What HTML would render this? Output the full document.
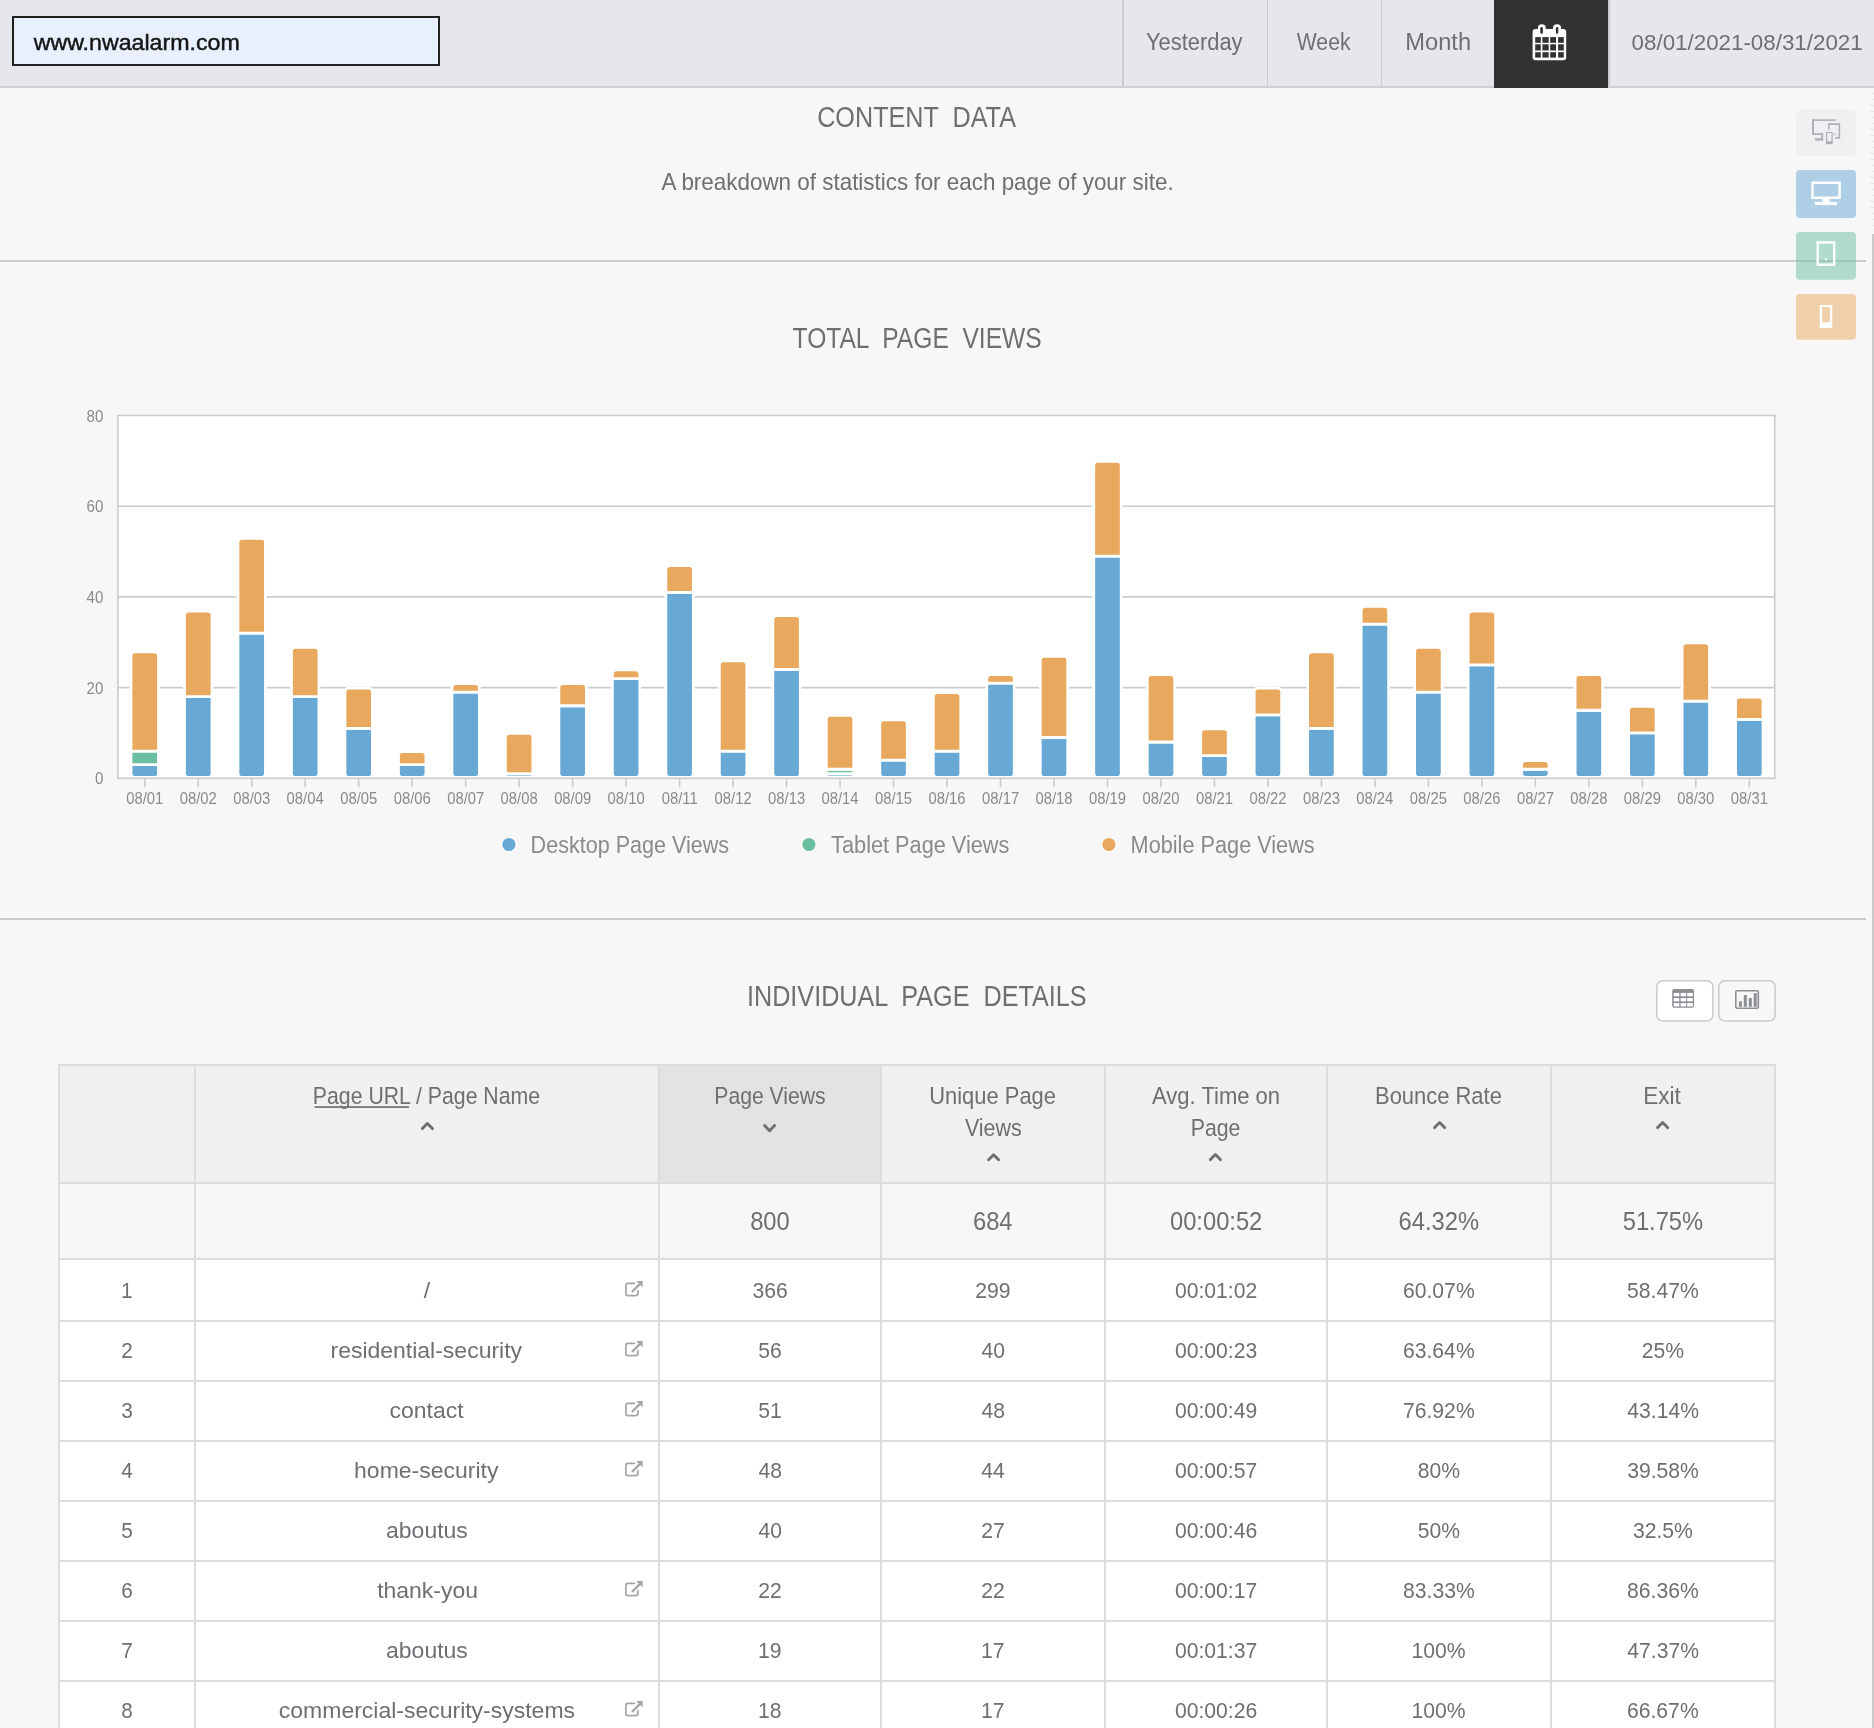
<!DOCTYPE html>
<html><head><meta charset="utf-8"><title>Content Data</title>
<style>
html,body{margin:0;padding:0;background:#f7f7f7;}
body{width:1874px;height:1728px;overflow:hidden;position:relative;font-family:"Liberation Sans",sans-serif;}
.topbar{position:absolute;left:0;top:0;width:1874px;height:86px;background:#e6e7eb;border-bottom:2px solid #cfd0d4;}
.div{position:absolute;top:0;width:1.5px;height:86px;background:#cacbcf;}
.search{position:absolute;left:12px;top:16px;width:424px;height:46px;border:2px solid #222;background:#e8f0fe;}
.sep{position:absolute;left:0;height:2px;background:#cbcbcf;}
.ticks{position:absolute;left:1870px;top:88px;width:4px;height:140px;background:repeating-linear-gradient(to bottom, transparent 0 5px, #e6e6e6 5px 6px);}
.vscroll{position:absolute;left:1871.5px;top:234px;width:2.5px;height:1494px;background:#c9c9c9;}
svg{position:absolute;left:0;top:0;will-change:transform;}
text{font-family:"Liberation Sans",sans-serif;white-space:pre;}
</style></head><body>
<div class="topbar"></div>
<div class="div" style="left:1122px"></div>
<div class="div" style="left:1266.5px"></div>
<div class="div" style="left:1380.5px"></div>
<div class="div" style="left:1608px"></div>
<div class="search"></div>
<div class="sep" style="top:260px;width:1866px"></div>
<div class="sep" style="top:918px;width:1866px"></div>
<div class="vscroll"></div>
<div class="ticks"></div>
<svg width="1874" height="1728" viewBox="0 0 1874 1728">
<g id="chart"><rect x="117.80" y="415.50" width="1656.90" height="362.80" fill="#fff"/>
<line x1="117.80" y1="687.60" x2="1774.70" y2="687.60" stroke="#cbccd1" stroke-width="1.6"/>
<line x1="117.80" y1="596.90" x2="1774.70" y2="596.90" stroke="#cbccd1" stroke-width="1.6"/>
<line x1="117.80" y1="506.20" x2="1774.70" y2="506.20" stroke="#cbccd1" stroke-width="1.6"/>
<path d="M131.00 764.69 L158.50 764.69 L158.50 773.30 Q158.50 777.50 154.30 777.50 L135.20 777.50 Q131.00 777.50 131.00 773.30 Z" fill="#68a8d5" stroke="#fff" stroke-width="2.8"/>
<path d="M131.00 751.09 L158.50 751.09 L158.50 764.69 L131.00 764.69 Z" fill="#6bbf9f" stroke="#fff" stroke-width="2.8"/>
<path d="M131.00 656.02 Q131.00 651.82 135.20 651.82 L154.30 651.82 Q158.50 651.82 158.50 656.02 L158.50 751.09 L131.00 751.09 Z" fill="#e8a95e" stroke="#fff" stroke-width="2.8"/>
<path d="M184.49 696.67 L211.99 696.67 L211.99 773.30 Q211.99 777.50 207.79 777.50 L188.69 777.50 Q184.49 777.50 184.49 773.30 Z" fill="#68a8d5" stroke="#fff" stroke-width="2.8"/>
<path d="M184.49 615.21 Q184.49 611.00 188.69 611.00 L207.79 611.00 Q211.99 611.00 211.99 615.21 L211.99 696.67 L184.49 696.67 Z" fill="#e8a95e" stroke="#fff" stroke-width="2.8"/>
<path d="M237.97 633.18 L265.47 633.18 L265.47 773.30 Q265.47 777.50 261.27 777.50 L242.17 777.50 Q237.97 777.50 237.97 773.30 Z" fill="#68a8d5" stroke="#fff" stroke-width="2.8"/>
<path d="M237.97 542.64 Q237.97 538.44 242.17 538.44 L261.27 538.44 Q265.47 538.44 265.47 542.64 L265.47 633.18 L237.97 633.18 Z" fill="#e8a95e" stroke="#fff" stroke-width="2.8"/>
<path d="M291.45 696.67 L318.95 696.67 L318.95 773.30 Q318.95 777.50 314.75 777.50 L295.65 777.50 Q291.45 777.50 291.45 773.30 Z" fill="#68a8d5" stroke="#fff" stroke-width="2.8"/>
<path d="M291.45 651.49 Q291.45 647.28 295.65 647.28 L314.75 647.28 Q318.95 647.28 318.95 651.49 L318.95 696.67 L291.45 696.67 Z" fill="#e8a95e" stroke="#fff" stroke-width="2.8"/>
<path d="M344.94 728.41 L372.44 728.41 L372.44 773.30 Q372.44 777.50 368.24 777.50 L349.14 777.50 Q344.94 777.50 344.94 773.30 Z" fill="#68a8d5" stroke="#fff" stroke-width="2.8"/>
<path d="M344.94 692.30 Q344.94 688.10 349.14 688.10 L368.24 688.10 Q372.44 688.10 372.44 692.30 L372.44 728.41 L344.94 728.41 Z" fill="#e8a95e" stroke="#fff" stroke-width="2.8"/>
<path d="M398.43 764.69 L425.93 764.69 L425.93 773.30 Q425.93 777.50 421.73 777.50 L402.62 777.50 Q398.43 777.50 398.43 773.30 Z" fill="#68a8d5" stroke="#fff" stroke-width="2.8"/>
<path d="M398.43 755.79 Q398.43 751.59 402.62 751.59 L421.73 751.59 Q425.93 751.59 425.93 755.79 L425.93 764.69 L398.43 764.69 Z" fill="#e8a95e" stroke="#fff" stroke-width="2.8"/>
<path d="M451.91 692.13 L479.41 692.13 L479.41 773.30 Q479.41 777.50 475.21 777.50 L456.11 777.50 Q451.91 777.50 451.91 773.30 Z" fill="#68a8d5" stroke="#fff" stroke-width="2.8"/>
<path d="M451.91 687.76 Q451.91 683.56 456.11 683.56 L475.21 683.56 Q479.41 683.56 479.41 687.76 L479.41 692.13 L451.91 692.13 Z" fill="#e8a95e" stroke="#fff" stroke-width="2.8"/>
<path d="M505.39 773.76 L532.89 773.76 L532.89 775.63 Q532.89 777.50 531.03 777.50 L507.26 777.50 Q505.39 777.50 505.39 775.63 Z" fill="#68a8d5" stroke="#fff" stroke-width="2.8"/>
<path d="M505.39 737.65 Q505.39 733.45 509.59 733.45 L528.69 733.45 Q532.89 733.45 532.89 737.65 L532.89 773.76 L505.39 773.76 Z" fill="#e8a95e" stroke="#fff" stroke-width="2.8"/>
<path d="M558.88 705.74 L586.38 705.74 L586.38 773.30 Q586.38 777.50 582.18 777.50 L563.08 777.50 Q558.88 777.50 558.88 773.30 Z" fill="#68a8d5" stroke="#fff" stroke-width="2.8"/>
<path d="M558.88 687.76 Q558.88 683.56 563.08 683.56 L582.18 683.56 Q586.38 683.56 586.38 687.76 L586.38 705.74 L558.88 705.74 Z" fill="#e8a95e" stroke="#fff" stroke-width="2.8"/>
<path d="M612.37 678.53 L639.87 678.53 L639.87 773.30 Q639.87 777.50 635.66 777.50 L616.57 777.50 Q612.37 777.50 612.37 773.30 Z" fill="#68a8d5" stroke="#fff" stroke-width="2.8"/>
<path d="M612.37 674.16 Q612.37 669.96 616.57 669.96 L635.66 669.96 Q639.87 669.96 639.87 674.16 L639.87 678.53 L612.37 678.53 Z" fill="#e8a95e" stroke="#fff" stroke-width="2.8"/>
<path d="M665.85 592.37 L693.35 592.37 L693.35 773.30 Q693.35 777.50 689.15 777.50 L670.05 777.50 Q665.85 777.50 665.85 773.30 Z" fill="#68a8d5" stroke="#fff" stroke-width="2.8"/>
<path d="M665.85 569.86 Q665.85 565.65 670.05 565.65 L689.15 565.65 Q693.35 565.65 693.35 569.86 L693.35 592.37 L665.85 592.37 Z" fill="#e8a95e" stroke="#fff" stroke-width="2.8"/>
<path d="M719.34 751.09 L746.84 751.09 L746.84 773.30 Q746.84 777.50 742.63 777.50 L723.54 777.50 Q719.34 777.50 719.34 773.30 Z" fill="#68a8d5" stroke="#fff" stroke-width="2.8"/>
<path d="M719.34 665.09 Q719.34 660.89 723.54 660.89 L742.63 660.89 Q746.84 660.89 746.84 665.09 L746.84 751.09 L719.34 751.09 Z" fill="#e8a95e" stroke="#fff" stroke-width="2.8"/>
<path d="M772.82 669.46 L800.32 669.46 L800.32 773.30 Q800.32 777.50 796.12 777.50 L777.02 777.50 Q772.82 777.50 772.82 773.30 Z" fill="#68a8d5" stroke="#fff" stroke-width="2.8"/>
<path d="M772.82 619.74 Q772.82 615.54 777.02 615.54 L796.12 615.54 Q800.32 615.54 800.32 619.74 L800.32 669.46 L772.82 669.46 Z" fill="#e8a95e" stroke="#fff" stroke-width="2.8"/>
<path d="M826.30 773.76 L853.80 773.76 L853.80 775.63 Q853.80 777.50 851.94 777.50 L828.17 777.50 Q826.30 777.50 826.30 775.63 Z" fill="#68a8d5" stroke="#fff" stroke-width="2.8"/>
<path d="M826.30 769.23 L853.80 769.23 L853.80 773.76 L826.30 773.76 Z" fill="#6bbf9f" stroke="#fff" stroke-width="2.8"/>
<path d="M826.30 719.51 Q826.30 715.31 830.50 715.31 L849.60 715.31 Q853.80 715.31 853.80 719.51 L853.80 769.23 L826.30 769.23 Z" fill="#e8a95e" stroke="#fff" stroke-width="2.8"/>
<path d="M879.79 760.16 L907.29 760.16 L907.29 773.30 Q907.29 777.50 903.09 777.50 L883.99 777.50 Q879.79 777.50 879.79 773.30 Z" fill="#68a8d5" stroke="#fff" stroke-width="2.8"/>
<path d="M879.79 724.04 Q879.79 719.84 883.99 719.84 L903.09 719.84 Q907.29 719.84 907.29 724.04 L907.29 760.16 L879.79 760.16 Z" fill="#e8a95e" stroke="#fff" stroke-width="2.8"/>
<path d="M933.27 751.09 L960.77 751.09 L960.77 773.30 Q960.77 777.50 956.57 777.50 L937.48 777.50 Q933.27 777.50 933.27 773.30 Z" fill="#68a8d5" stroke="#fff" stroke-width="2.8"/>
<path d="M933.27 696.84 Q933.27 692.63 937.48 692.63 L956.57 692.63 Q960.77 692.63 960.77 696.84 L960.77 751.09 L933.27 751.09 Z" fill="#e8a95e" stroke="#fff" stroke-width="2.8"/>
<path d="M986.76 683.06 L1014.26 683.06 L1014.26 773.30 Q1014.26 777.50 1010.06 777.50 L990.96 777.50 Q986.76 777.50 986.76 773.30 Z" fill="#68a8d5" stroke="#fff" stroke-width="2.8"/>
<path d="M986.76 678.70 Q986.76 674.50 990.96 674.50 L1010.06 674.50 Q1014.26 674.50 1014.26 678.70 L1014.26 683.06 L986.76 683.06 Z" fill="#e8a95e" stroke="#fff" stroke-width="2.8"/>
<path d="M1040.24 737.49 L1067.74 737.49 L1067.74 773.30 Q1067.74 777.50 1063.54 777.50 L1044.44 777.50 Q1040.24 777.50 1040.24 773.30 Z" fill="#68a8d5" stroke="#fff" stroke-width="2.8"/>
<path d="M1040.24 660.56 Q1040.24 656.36 1044.44 656.36 L1063.54 656.36 Q1067.74 656.36 1067.74 660.56 L1067.74 737.49 L1040.24 737.49 Z" fill="#e8a95e" stroke="#fff" stroke-width="2.8"/>
<path d="M1093.73 556.09 L1121.23 556.09 L1121.23 773.30 Q1121.23 777.50 1117.03 777.50 L1097.93 777.50 Q1093.73 777.50 1093.73 773.30 Z" fill="#68a8d5" stroke="#fff" stroke-width="2.8"/>
<path d="M1093.73 465.55 Q1093.73 461.35 1097.93 461.35 L1117.03 461.35 Q1121.23 461.35 1121.23 465.55 L1121.23 556.09 L1093.73 556.09 Z" fill="#e8a95e" stroke="#fff" stroke-width="2.8"/>
<path d="M1147.22 742.02 L1174.72 742.02 L1174.72 773.30 Q1174.72 777.50 1170.52 777.50 L1151.42 777.50 Q1147.22 777.50 1147.22 773.30 Z" fill="#68a8d5" stroke="#fff" stroke-width="2.8"/>
<path d="M1147.22 678.70 Q1147.22 674.50 1151.42 674.50 L1170.52 674.50 Q1174.72 674.50 1174.72 678.70 L1174.72 742.02 L1147.22 742.02 Z" fill="#e8a95e" stroke="#fff" stroke-width="2.8"/>
<path d="M1200.70 755.62 L1228.20 755.62 L1228.20 773.30 Q1228.20 777.50 1224.00 777.50 L1204.90 777.50 Q1200.70 777.50 1200.70 773.30 Z" fill="#68a8d5" stroke="#fff" stroke-width="2.8"/>
<path d="M1200.70 733.12 Q1200.70 728.91 1204.90 728.91 L1224.00 728.91 Q1228.20 728.91 1228.20 733.12 L1228.20 755.62 L1200.70 755.62 Z" fill="#e8a95e" stroke="#fff" stroke-width="2.8"/>
<path d="M1254.18 714.81 L1281.68 714.81 L1281.68 773.30 Q1281.68 777.50 1277.48 777.50 L1258.38 777.50 Q1254.18 777.50 1254.18 773.30 Z" fill="#68a8d5" stroke="#fff" stroke-width="2.8"/>
<path d="M1254.18 692.30 Q1254.18 688.10 1258.38 688.10 L1277.48 688.10 Q1281.68 688.10 1281.68 692.30 L1281.68 714.81 L1254.18 714.81 Z" fill="#e8a95e" stroke="#fff" stroke-width="2.8"/>
<path d="M1307.67 728.41 L1335.17 728.41 L1335.17 773.30 Q1335.17 777.50 1330.97 777.50 L1311.87 777.50 Q1307.67 777.50 1307.67 773.30 Z" fill="#68a8d5" stroke="#fff" stroke-width="2.8"/>
<path d="M1307.67 656.02 Q1307.67 651.82 1311.87 651.82 L1330.97 651.82 Q1335.17 651.82 1335.17 656.02 L1335.17 728.41 L1307.67 728.41 Z" fill="#e8a95e" stroke="#fff" stroke-width="2.8"/>
<path d="M1361.15 624.11 L1388.65 624.11 L1388.65 773.30 Q1388.65 777.50 1384.45 777.50 L1365.36 777.50 Q1361.15 777.50 1361.15 773.30 Z" fill="#68a8d5" stroke="#fff" stroke-width="2.8"/>
<path d="M1361.15 610.67 Q1361.15 606.47 1365.36 606.47 L1384.45 606.47 Q1388.65 606.47 1388.65 610.67 L1388.65 624.11 L1361.15 624.11 Z" fill="#e8a95e" stroke="#fff" stroke-width="2.8"/>
<path d="M1414.64 692.13 L1442.14 692.13 L1442.14 773.30 Q1442.14 777.50 1437.94 777.50 L1418.84 777.50 Q1414.64 777.50 1414.64 773.30 Z" fill="#68a8d5" stroke="#fff" stroke-width="2.8"/>
<path d="M1414.64 651.49 Q1414.64 647.28 1418.84 647.28 L1437.94 647.28 Q1442.14 647.28 1442.14 651.49 L1442.14 692.13 L1414.64 692.13 Z" fill="#e8a95e" stroke="#fff" stroke-width="2.8"/>
<path d="M1468.12 664.92 L1495.62 664.92 L1495.62 773.30 Q1495.62 777.50 1491.42 777.50 L1472.33 777.50 Q1468.12 777.50 1468.12 773.30 Z" fill="#68a8d5" stroke="#fff" stroke-width="2.8"/>
<path d="M1468.12 615.21 Q1468.12 611.00 1472.33 611.00 L1491.42 611.00 Q1495.62 611.00 1495.62 615.21 L1495.62 664.92 L1468.12 664.92 Z" fill="#e8a95e" stroke="#fff" stroke-width="2.8"/>
<path d="M1521.61 769.23 L1549.11 769.23 L1549.11 773.37 Q1549.11 777.50 1544.97 777.50 L1525.74 777.50 Q1521.61 777.50 1521.61 773.37 Z" fill="#68a8d5" stroke="#fff" stroke-width="2.8"/>
<path d="M1521.61 764.86 Q1521.61 760.66 1525.81 760.66 L1544.91 760.66 Q1549.11 760.66 1549.11 764.86 L1549.11 769.23 L1521.61 769.23 Z" fill="#e8a95e" stroke="#fff" stroke-width="2.8"/>
<path d="M1575.10 710.27 L1602.60 710.27 L1602.60 773.30 Q1602.60 777.50 1598.39 777.50 L1579.30 777.50 Q1575.10 777.50 1575.10 773.30 Z" fill="#68a8d5" stroke="#fff" stroke-width="2.8"/>
<path d="M1575.10 678.70 Q1575.10 674.50 1579.30 674.50 L1598.39 674.50 Q1602.60 674.50 1602.60 678.70 L1602.60 710.27 L1575.10 710.27 Z" fill="#e8a95e" stroke="#fff" stroke-width="2.8"/>
<path d="M1628.58 732.95 L1656.08 732.95 L1656.08 773.30 Q1656.08 777.50 1651.88 777.50 L1632.78 777.50 Q1628.58 777.50 1628.58 773.30 Z" fill="#68a8d5" stroke="#fff" stroke-width="2.8"/>
<path d="M1628.58 710.44 Q1628.58 706.24 1632.78 706.24 L1651.88 706.24 Q1656.08 706.24 1656.08 710.44 L1656.08 732.95 L1628.58 732.95 Z" fill="#e8a95e" stroke="#fff" stroke-width="2.8"/>
<path d="M1682.07 701.20 L1709.57 701.20 L1709.57 773.30 Q1709.57 777.50 1705.37 777.50 L1686.27 777.50 Q1682.07 777.50 1682.07 773.30 Z" fill="#68a8d5" stroke="#fff" stroke-width="2.8"/>
<path d="M1682.07 646.95 Q1682.07 642.75 1686.27 642.75 L1705.37 642.75 Q1709.57 642.75 1709.57 646.95 L1709.57 701.20 L1682.07 701.20 Z" fill="#e8a95e" stroke="#fff" stroke-width="2.8"/>
<path d="M1735.55 719.34 L1763.05 719.34 L1763.05 773.30 Q1763.05 777.50 1758.85 777.50 L1739.75 777.50 Q1735.55 777.50 1735.55 773.30 Z" fill="#68a8d5" stroke="#fff" stroke-width="2.8"/>
<path d="M1735.55 701.37 Q1735.55 697.17 1739.75 697.17 L1758.85 697.17 Q1763.05 697.17 1763.05 701.37 L1763.05 719.34 L1735.55 719.34 Z" fill="#e8a95e" stroke="#fff" stroke-width="2.8"/>
<rect x="117.80" y="415.50" width="1656.90" height="362.80" fill="none" stroke="#cbccd1" stroke-width="1.6"/>
<line x1="144.75" y1="778.30" x2="144.75" y2="787.30" stroke="#cbccd1" stroke-width="1.6"/>
<line x1="198.24" y1="778.30" x2="198.24" y2="787.30" stroke="#cbccd1" stroke-width="1.6"/>
<line x1="251.72" y1="778.30" x2="251.72" y2="787.30" stroke="#cbccd1" stroke-width="1.6"/>
<line x1="305.20" y1="778.30" x2="305.20" y2="787.30" stroke="#cbccd1" stroke-width="1.6"/>
<line x1="358.69" y1="778.30" x2="358.69" y2="787.30" stroke="#cbccd1" stroke-width="1.6"/>
<line x1="412.18" y1="778.30" x2="412.18" y2="787.30" stroke="#cbccd1" stroke-width="1.6"/>
<line x1="465.66" y1="778.30" x2="465.66" y2="787.30" stroke="#cbccd1" stroke-width="1.6"/>
<line x1="519.14" y1="778.30" x2="519.14" y2="787.30" stroke="#cbccd1" stroke-width="1.6"/>
<line x1="572.63" y1="778.30" x2="572.63" y2="787.30" stroke="#cbccd1" stroke-width="1.6"/>
<line x1="626.12" y1="778.30" x2="626.12" y2="787.30" stroke="#cbccd1" stroke-width="1.6"/>
<line x1="679.60" y1="778.30" x2="679.60" y2="787.30" stroke="#cbccd1" stroke-width="1.6"/>
<line x1="733.09" y1="778.30" x2="733.09" y2="787.30" stroke="#cbccd1" stroke-width="1.6"/>
<line x1="786.57" y1="778.30" x2="786.57" y2="787.30" stroke="#cbccd1" stroke-width="1.6"/>
<line x1="840.05" y1="778.30" x2="840.05" y2="787.30" stroke="#cbccd1" stroke-width="1.6"/>
<line x1="893.54" y1="778.30" x2="893.54" y2="787.30" stroke="#cbccd1" stroke-width="1.6"/>
<line x1="947.02" y1="778.30" x2="947.02" y2="787.30" stroke="#cbccd1" stroke-width="1.6"/>
<line x1="1000.51" y1="778.30" x2="1000.51" y2="787.30" stroke="#cbccd1" stroke-width="1.6"/>
<line x1="1053.99" y1="778.30" x2="1053.99" y2="787.30" stroke="#cbccd1" stroke-width="1.6"/>
<line x1="1107.48" y1="778.30" x2="1107.48" y2="787.30" stroke="#cbccd1" stroke-width="1.6"/>
<line x1="1160.97" y1="778.30" x2="1160.97" y2="787.30" stroke="#cbccd1" stroke-width="1.6"/>
<line x1="1214.45" y1="778.30" x2="1214.45" y2="787.30" stroke="#cbccd1" stroke-width="1.6"/>
<line x1="1267.93" y1="778.30" x2="1267.93" y2="787.30" stroke="#cbccd1" stroke-width="1.6"/>
<line x1="1321.42" y1="778.30" x2="1321.42" y2="787.30" stroke="#cbccd1" stroke-width="1.6"/>
<line x1="1374.90" y1="778.30" x2="1374.90" y2="787.30" stroke="#cbccd1" stroke-width="1.6"/>
<line x1="1428.39" y1="778.30" x2="1428.39" y2="787.30" stroke="#cbccd1" stroke-width="1.6"/>
<line x1="1481.88" y1="778.30" x2="1481.88" y2="787.30" stroke="#cbccd1" stroke-width="1.6"/>
<line x1="1535.36" y1="778.30" x2="1535.36" y2="787.30" stroke="#cbccd1" stroke-width="1.6"/>
<line x1="1588.85" y1="778.30" x2="1588.85" y2="787.30" stroke="#cbccd1" stroke-width="1.6"/>
<line x1="1642.33" y1="778.30" x2="1642.33" y2="787.30" stroke="#cbccd1" stroke-width="1.6"/>
<line x1="1695.82" y1="778.30" x2="1695.82" y2="787.30" stroke="#cbccd1" stroke-width="1.6"/>
<line x1="1749.30" y1="778.30" x2="1749.30" y2="787.30" stroke="#cbccd1" stroke-width="1.6"/>
<circle cx="508.90" cy="844.5" r="7.2" fill="#68a8d5" stroke="#fff" stroke-width="1.2"/>
<circle cx="808.90" cy="844.5" r="7.2" fill="#6bbf9f" stroke="#fff" stroke-width="1.2"/>
<circle cx="1108.90" cy="844.5" r="7.2" fill="#e8a95e" stroke="#fff" stroke-width="1.2"/></g>
<g id="table"><rect x="59" y="1065" width="1716" height="118" fill="#f0f0f0"/>
<rect x="659" y="1065" width="222" height="118" fill="#e3e3e3"/>
<rect x="59" y="1183" width="1716" height="76" fill="#f7f7f7"/>
<rect x="59" y="1259" width="1716" height="469" fill="#fff"/>
<rect x="58" y="1064.0" width="1718" height="2" fill="#dcdcdc"/>
<rect x="58" y="1182.0" width="1718" height="2" fill="#dcdcdc"/>
<rect x="58" y="1258.0" width="1718" height="2" fill="#dcdcdc"/>
<rect x="58" y="1320.0" width="1718" height="2" fill="#dcdcdc"/>
<rect x="58" y="1380.0" width="1718" height="2" fill="#dcdcdc"/>
<rect x="58" y="1440.0" width="1718" height="2" fill="#dcdcdc"/>
<rect x="58" y="1500.0" width="1718" height="2" fill="#dcdcdc"/>
<rect x="58" y="1560.0" width="1718" height="2" fill="#dcdcdc"/>
<rect x="58" y="1620.0" width="1718" height="2" fill="#dcdcdc"/>
<rect x="58" y="1680.0" width="1718" height="2" fill="#dcdcdc"/>
<rect x="58" y="1740.0" width="1718" height="2" fill="#dcdcdc"/>
<rect x="58.0" y="1064" width="2" height="664" fill="#dcdcdc"/>
<rect x="194.0" y="1064" width="2" height="664" fill="#dcdcdc"/>
<rect x="658.0" y="1064" width="2" height="664" fill="#dcdcdc"/>
<rect x="880.0" y="1064" width="2" height="664" fill="#dcdcdc"/>
<rect x="1104.0" y="1064" width="2" height="664" fill="#dcdcdc"/>
<rect x="1326.0" y="1064" width="2" height="664" fill="#dcdcdc"/>
<rect x="1550.0" y="1064" width="2" height="664" fill="#dcdcdc"/>
<rect x="1774.0" y="1064" width="2" height="664" fill="#dcdcdc"/>
<rect x="314.6" y="1106.2" width="94.3" height="1.7" fill="#6e6f73"/>
<path d="M422.40 1128.60 L427.40 1123.50 L432.40 1128.60" fill="none" stroke="#6e6f73" stroke-width="2.9" stroke-linecap="round" stroke-linejoin="round"/>
<path d="M764.60 1125.60 L769.60 1130.70 L774.60 1125.60" fill="none" stroke="#6e6f73" stroke-width="2.9" stroke-linecap="round" stroke-linejoin="round"/>
<path d="M988.60 1159.80 L993.60 1154.70 L998.60 1159.80" fill="none" stroke="#6e6f73" stroke-width="2.9" stroke-linecap="round" stroke-linejoin="round"/>
<path d="M1210.40 1159.60 L1215.40 1154.50 L1220.40 1159.60" fill="none" stroke="#6e6f73" stroke-width="2.9" stroke-linecap="round" stroke-linejoin="round"/>
<path d="M1434.60 1127.60 L1439.60 1122.50 L1444.60 1127.60" fill="none" stroke="#6e6f73" stroke-width="2.9" stroke-linecap="round" stroke-linejoin="round"/>
<path d="M1657.60 1127.60 L1662.60 1122.50 L1667.60 1127.60" fill="none" stroke="#6e6f73" stroke-width="2.9" stroke-linecap="round" stroke-linejoin="round"/>
<path d="M635.00 1283.40 H628.00 Q625.90 1283.40 625.90 1285.50 V1293.50 Q625.90 1295.60 628.00 1295.60 H635.80 Q637.90 1295.60 637.90 1293.50 V1290.00" fill="none" stroke="#a3a5a8" stroke-width="1.7"/>
<path d="M632.60 1291.30 L639.00 1284.90" stroke="#a3a5a8" stroke-width="2.3" stroke-linecap="round"/>
<path d="M636.20 1281.00 H642.70 V1287.50 Z" fill="#a3a5a8"/>
<path d="M635.00 1343.40 H628.00 Q625.90 1343.40 625.90 1345.50 V1353.50 Q625.90 1355.60 628.00 1355.60 H635.80 Q637.90 1355.60 637.90 1353.50 V1350.00" fill="none" stroke="#a3a5a8" stroke-width="1.7"/>
<path d="M632.60 1351.30 L639.00 1344.90" stroke="#a3a5a8" stroke-width="2.3" stroke-linecap="round"/>
<path d="M636.20 1341.00 H642.70 V1347.50 Z" fill="#a3a5a8"/>
<path d="M635.00 1403.40 H628.00 Q625.90 1403.40 625.90 1405.50 V1413.50 Q625.90 1415.60 628.00 1415.60 H635.80 Q637.90 1415.60 637.90 1413.50 V1410.00" fill="none" stroke="#a3a5a8" stroke-width="1.7"/>
<path d="M632.60 1411.30 L639.00 1404.90" stroke="#a3a5a8" stroke-width="2.3" stroke-linecap="round"/>
<path d="M636.20 1401.00 H642.70 V1407.50 Z" fill="#a3a5a8"/>
<path d="M635.00 1463.40 H628.00 Q625.90 1463.40 625.90 1465.50 V1473.50 Q625.90 1475.60 628.00 1475.60 H635.80 Q637.90 1475.60 637.90 1473.50 V1470.00" fill="none" stroke="#a3a5a8" stroke-width="1.7"/>
<path d="M632.60 1471.30 L639.00 1464.90" stroke="#a3a5a8" stroke-width="2.3" stroke-linecap="round"/>
<path d="M636.20 1461.00 H642.70 V1467.50 Z" fill="#a3a5a8"/>
<path d="M635.00 1583.40 H628.00 Q625.90 1583.40 625.90 1585.50 V1593.50 Q625.90 1595.60 628.00 1595.60 H635.80 Q637.90 1595.60 637.90 1593.50 V1590.00" fill="none" stroke="#a3a5a8" stroke-width="1.7"/>
<path d="M632.60 1591.30 L639.00 1584.90" stroke="#a3a5a8" stroke-width="2.3" stroke-linecap="round"/>
<path d="M636.20 1581.00 H642.70 V1587.50 Z" fill="#a3a5a8"/>
<path d="M635.00 1703.40 H628.00 Q625.90 1703.40 625.90 1705.50 V1713.50 Q625.90 1715.60 628.00 1715.60 H635.80 Q637.90 1715.60 637.90 1713.50 V1710.00" fill="none" stroke="#a3a5a8" stroke-width="1.7"/>
<path d="M632.60 1711.30 L639.00 1704.90" stroke="#a3a5a8" stroke-width="2.3" stroke-linecap="round"/>
<path d="M636.20 1701.00 H642.70 V1707.50 Z" fill="#a3a5a8"/></g>
<g id="icons"><rect x="1494" y="0" width="114" height="88" fill="#323232"/>
<rect x="1532.6" y="29.0" width="33.6" height="31.2" rx="3" fill="#fff"/>
<rect x="1537.9" y="24.2" width="7.85" height="10" rx="3.9" fill="#fff"/>
<rect x="1553.0" y="24.2" width="8.1" height="10" rx="3.9" fill="#fff"/>
<rect x="1540.3" y="27.0" width="2.6" height="6.8" rx="1.2" fill="#323232"/>
<rect x="1555.9" y="27.0" width="2.4" height="6.8" rx="1.2" fill="#323232"/>
<rect x="1535.2" y="37.1" width="5.6" height="5.7" fill="#323232"/>
<rect x="1535.2" y="44.3" width="5.6" height="6.2" fill="#323232"/>
<rect x="1535.2" y="52.2" width="5.6" height="5.4" fill="#323232"/>
<rect x="1542.4" y="37.1" width="6.3" height="5.7" fill="#323232"/>
<rect x="1542.4" y="44.3" width="6.3" height="6.2" fill="#323232"/>
<rect x="1542.4" y="52.2" width="6.3" height="5.4" fill="#323232"/>
<rect x="1550.2" y="37.1" width="5.8" height="5.7" fill="#323232"/>
<rect x="1550.2" y="44.3" width="5.8" height="6.2" fill="#323232"/>
<rect x="1550.2" y="52.2" width="5.8" height="5.4" fill="#323232"/>
<rect x="1558.1" y="37.1" width="5.7" height="5.7" fill="#323232"/>
<rect x="1558.1" y="44.3" width="5.7" height="6.2" fill="#323232"/>
<rect x="1558.1" y="52.2" width="5.7" height="5.4" fill="#323232"/>
<rect x="1796" y="110" width="60" height="45.7" rx="4" fill="#eff0f2"/>
<rect x="1812.0" y="119.3" width="23.9" height="1.6" fill="#aeb0b3"/>
<rect x="1812.0" y="119.3" width="2.0" height="15.6" fill="#aeb0b3"/>
<rect x="1812.0" y="133.1" width="11.1" height="1.8" fill="#aeb0b3"/>
<rect x="1821.2" y="133.1" width="1.9" height="7.5" fill="#aeb0b3"/>
<rect x="1815.0" y="138.2" width="8.1" height="2.4" fill="#aeb0b3"/>
<path d="M1828.8 129.7 V124.1 H1839.4 V137.9 H1835.1" fill="none" stroke="#aeb0b3" stroke-width="1.6"/>
<circle cx="1834.7" cy="134.4" r="0.9" fill="#aeb0b3"/>
<path d="M1826 131.9 H1832.7 V144.2 H1826 Z M1827.2 133.1 V141.2 H1831.5 V133.1 Z" fill="#aeb0b3" fill-rule="evenodd"/>
<rect x="1796" y="170" width="60" height="47.9" rx="4" fill="#68a8d5" fill-opacity="0.5"/>
<path d="M1811.3 181.6 H1840.8 V199.1 H1811.3 Z M1813.7 183.9 V196.6 H1838.4 V183.9 Z" fill="#fff" fill-rule="evenodd"/>
<rect x="1822.6" y="199" width="6.9" height="3" fill="#fff"/><rect x="1814.8" y="201.9" width="22.2" height="3.2" fill="#fff"/>
<rect x="1796" y="232" width="60" height="47.8" rx="4" fill="#6bbf9f" fill-opacity="0.5"/>
<rect x="1817.7" y="242.4" width="16.5" height="22.3" fill="none" stroke="#fff" stroke-width="2.4"/>
<circle cx="1825.9" cy="259.3" r="1.1" fill="#fff"/>
<rect x="1796" y="294" width="60" height="45.8" rx="4" fill="#e8a95e" fill-opacity="0.5"/>
<path d="M1819.7 305 H1832.2 V328 H1819.7 Z M1822.0 307.0 V322.2 H1829.9 V307.0 Z" fill="#fff" fill-rule="evenodd"/>
<rect x="1656.8" y="980.8" width="56.1" height="40.2" rx="6" fill="#fff" stroke="#c9cacd" stroke-width="1.5"/>
<rect x="1718.8" y="980.8" width="56.3" height="40.2" rx="6" fill="#f7f7f7" stroke="#c9cacd" stroke-width="1.5"/>
<path d="M1672.2 991 Q1672.2 989 1674.2 989 H1692 Q1694 989 1694 991 V1005.8 Q1694 1007.8 1692 1007.8 H1674.2 Q1672.2 1007.8 1672.2 1005.8 Z" fill="#8b8e92"/>
<rect x="1673.7" y="992.9" width="5.6" height="3.4" fill="#fff"/>
<rect x="1673.7" y="998.0" width="5.6" height="3.4" fill="#fff"/>
<rect x="1673.7" y="1003.1" width="5.6" height="3.4" fill="#fff"/>
<rect x="1680.6" y="992.9" width="5.6" height="3.4" fill="#fff"/>
<rect x="1680.6" y="998.0" width="5.6" height="3.4" fill="#fff"/>
<rect x="1680.6" y="1003.1" width="5.6" height="3.4" fill="#fff"/>
<rect x="1687.2" y="992.9" width="5.6" height="3.4" fill="#fff"/>
<rect x="1687.2" y="998.0" width="5.6" height="3.4" fill="#fff"/>
<rect x="1687.2" y="1003.1" width="5.6" height="3.4" fill="#fff"/>
<rect x="1735.8" y="990.7" width="22.5" height="17.6" rx="1.5" fill="none" stroke="#8b8e92" stroke-width="1.6"/>
<rect x="1738.9" y="1001.3" width="3.0" height="5.5" fill="#8b8e92"/>
<rect x="1743.8" y="995.0" width="3.0" height="11.8" fill="#8b8e92"/>
<rect x="1748.8" y="998.1" width="3.0" height="8.7" fill="#8b8e92"/>
<rect x="1753.7" y="993.2" width="3.0" height="13.6" fill="#8b8e92"/></g>
<g id="texts"><text transform="translate(33.66 50.00) scale(1.0375 1)" font-size="22.35" fill="#151515" stroke="#151515" stroke-width="0.45">www.nwaalarm.com</text>
<text transform="translate(1145.91 50.40) scale(0.8982 1)" font-size="24.40" fill="#6e6f73">Yesterday</text>
<text transform="translate(1296.79 50.40) scale(0.8674 1)" font-size="24.40" fill="#6e6f73">Week</text>
<text transform="translate(1405.24 50.40) scale(0.9715 1)" font-size="24.40" fill="#6e6f73">Month</text>
<text transform="translate(1631.61 50.20) scale(0.9846 1)" font-size="22.70" fill="#6e6f73">08/01/2021-08/31/2021</text>
<text transform="translate(817.14 126.50) scale(0.8634 1)" font-size="29.20" fill="#6e6f73">CONTENT  DATA</text>
<text transform="translate(661.44 190.10) scale(0.9755 1)" font-size="23.00" fill="#6e6f73">A breakdown of statistics for each page of your site.</text>
<text transform="translate(792.55 348.10) scale(0.8512 1)" font-size="28.90" fill="#6e6f73">TOTAL  PAGE  VIEWS</text>
<text transform="translate(746.97 1006.40) scale(0.8366 1)" font-size="30.10" fill="#6e6f73">INDIVIDUAL  PAGE  DETAILS</text>
<text transform="translate(144.81 804.00) scale(0.9460 1)" font-size="15.68" fill="#8a8a8a" text-anchor="middle">08/01</text>
<text transform="translate(198.31 804.00) scale(0.9460 1)" font-size="15.68" fill="#8a8a8a" text-anchor="middle">08/02</text>
<text transform="translate(251.74 804.00) scale(0.9460 1)" font-size="15.68" fill="#8a8a8a" text-anchor="middle">08/03</text>
<text transform="translate(305.11 804.00) scale(0.9460 1)" font-size="15.68" fill="#8a8a8a" text-anchor="middle">08/04</text>
<text transform="translate(358.69 804.00) scale(0.9460 1)" font-size="15.68" fill="#8a8a8a" text-anchor="middle">08/05</text>
<text transform="translate(412.19 804.00) scale(0.9460 1)" font-size="15.68" fill="#8a8a8a" text-anchor="middle">08/06</text>
<text transform="translate(465.73 804.00) scale(0.9460 1)" font-size="15.68" fill="#8a8a8a" text-anchor="middle">08/07</text>
<text transform="translate(519.16 804.00) scale(0.9460 1)" font-size="15.68" fill="#8a8a8a" text-anchor="middle">08/08</text>
<text transform="translate(572.67 804.00) scale(0.9460 1)" font-size="15.68" fill="#8a8a8a" text-anchor="middle">08/09</text>
<text transform="translate(626.10 804.00) scale(0.9460 1)" font-size="15.68" fill="#8a8a8a" text-anchor="middle">08/10</text>
<text transform="translate(679.66 804.00) scale(0.9460 1)" font-size="15.68" fill="#8a8a8a" text-anchor="middle">08/11</text>
<text transform="translate(733.16 804.00) scale(0.9460 1)" font-size="15.68" fill="#8a8a8a" text-anchor="middle">08/12</text>
<text transform="translate(786.59 804.00) scale(0.9460 1)" font-size="15.68" fill="#8a8a8a" text-anchor="middle">08/13</text>
<text transform="translate(839.96 804.00) scale(0.9460 1)" font-size="15.68" fill="#8a8a8a" text-anchor="middle">08/14</text>
<text transform="translate(893.54 804.00) scale(0.9460 1)" font-size="15.68" fill="#8a8a8a" text-anchor="middle">08/15</text>
<text transform="translate(947.04 804.00) scale(0.9460 1)" font-size="15.68" fill="#8a8a8a" text-anchor="middle">08/16</text>
<text transform="translate(1000.58 804.00) scale(0.9460 1)" font-size="15.68" fill="#8a8a8a" text-anchor="middle">08/17</text>
<text transform="translate(1054.01 804.00) scale(0.9460 1)" font-size="15.68" fill="#8a8a8a" text-anchor="middle">08/18</text>
<text transform="translate(1107.52 804.00) scale(0.9460 1)" font-size="15.68" fill="#8a8a8a" text-anchor="middle">08/19</text>
<text transform="translate(1160.95 804.00) scale(0.9460 1)" font-size="15.68" fill="#8a8a8a" text-anchor="middle">08/20</text>
<text transform="translate(1214.51 804.00) scale(0.9460 1)" font-size="15.68" fill="#8a8a8a" text-anchor="middle">08/21</text>
<text transform="translate(1268.01 804.00) scale(0.9460 1)" font-size="15.68" fill="#8a8a8a" text-anchor="middle">08/22</text>
<text transform="translate(1321.44 804.00) scale(0.9460 1)" font-size="15.68" fill="#8a8a8a" text-anchor="middle">08/23</text>
<text transform="translate(1374.81 804.00) scale(0.9460 1)" font-size="15.68" fill="#8a8a8a" text-anchor="middle">08/24</text>
<text transform="translate(1428.39 804.00) scale(0.9460 1)" font-size="15.68" fill="#8a8a8a" text-anchor="middle">08/25</text>
<text transform="translate(1481.89 804.00) scale(0.9460 1)" font-size="15.68" fill="#8a8a8a" text-anchor="middle">08/26</text>
<text transform="translate(1535.43 804.00) scale(0.9460 1)" font-size="15.68" fill="#8a8a8a" text-anchor="middle">08/27</text>
<text transform="translate(1588.86 804.00) scale(0.9460 1)" font-size="15.68" fill="#8a8a8a" text-anchor="middle">08/28</text>
<text transform="translate(1642.37 804.00) scale(0.9460 1)" font-size="15.68" fill="#8a8a8a" text-anchor="middle">08/29</text>
<text transform="translate(1695.80 804.00) scale(0.9460 1)" font-size="15.68" fill="#8a8a8a" text-anchor="middle">08/30</text>
<text transform="translate(1749.36 804.00) scale(0.9460 1)" font-size="15.68" fill="#8a8a8a" text-anchor="middle">08/31</text>
<text transform="translate(94.88 784.30) scale(0.9500 1)" font-size="15.90" fill="#8a8a8a">0</text>
<text transform="translate(86.50 693.60) scale(0.9500 1)" font-size="15.90" fill="#8a8a8a">20</text>
<text transform="translate(86.50 602.90) scale(0.9500 1)" font-size="15.90" fill="#8a8a8a">40</text>
<text transform="translate(86.50 512.20) scale(0.9500 1)" font-size="15.90" fill="#8a8a8a">60</text>
<text transform="translate(86.50 421.50) scale(0.9500 1)" font-size="15.90" fill="#8a8a8a">80</text>
<text transform="translate(530.62 853.00) scale(0.9256 1)" font-size="23.30" fill="#8a8a8a">Desktop Page Views</text>
<text transform="translate(831.11 853.00) scale(0.9329 1)" font-size="23.30" fill="#8a8a8a">Tablet Page Views</text>
<text transform="translate(1130.61 853.00) scale(0.9317 1)" font-size="23.30" fill="#8a8a8a">Mobile Page Views</text>
<text transform="translate(312.85 1104.20) scale(0.8974 1)" font-size="23.70" fill="#6e6f73">Page URL / Page Name</text>
<text transform="translate(714.35 1104.20) scale(0.8931 1)" font-size="23.70" fill="#6e6f73">Page Views</text>
<text transform="translate(929.20 1104.20) scale(0.9255 1)" font-size="23.70" fill="#6e6f73">Unique Page</text>
<text transform="translate(964.89 1136.00) scale(0.9053 1)" font-size="23.70" fill="#6e6f73">Views</text>
<text transform="translate(1152.04 1104.20) scale(0.9293 1)" font-size="23.70" fill="#6e6f73">Avg. Time on</text>
<text transform="translate(1190.75 1136.00) scale(0.8973 1)" font-size="23.70" fill="#6e6f73">Page</text>
<text transform="translate(1374.99 1104.20) scale(0.9267 1)" font-size="23.70" fill="#6e6f73">Bounce Rate</text>
<text transform="translate(1643.14 1104.20) scale(0.9522 1)" font-size="23.70" fill="#6e6f73">Exit</text>
<text transform="translate(769.95 1229.90) scale(0.9550 1)" font-size="24.86" fill="#6e6f73" text-anchor="middle">800</text>
<text transform="translate(992.74 1229.90) scale(0.9550 1)" font-size="24.86" fill="#6e6f73" text-anchor="middle">684</text>
<text transform="translate(1216.12 1229.90) scale(0.9550 1)" font-size="24.86" fill="#6e6f73" text-anchor="middle">00:00:52</text>
<text transform="translate(1438.81 1229.90) scale(0.9550 1)" font-size="24.86" fill="#6e6f73" text-anchor="middle">64.32%</text>
<text transform="translate(1662.93 1229.90) scale(0.9550 1)" font-size="24.86" fill="#6e6f73" text-anchor="middle">51.75%</text>
<text transform="translate(126.73 1298.20) scale(0.9500 1)" font-size="21.90" fill="#6e6f73" text-anchor="middle">1</text>
<text transform="translate(427.00 1298.20) scale(1.0500 1)" font-size="21.90" fill="#6e6f73" text-anchor="middle">/</text>
<text transform="translate(770.06 1298.20) scale(0.9650 1)" font-size="21.90" fill="#6e6f73" text-anchor="middle">366</text>
<text transform="translate(992.96 1298.20) scale(0.9650 1)" font-size="21.90" fill="#6e6f73" text-anchor="middle">299</text>
<text transform="translate(1216.11 1298.20) scale(0.9650 1)" font-size="21.90" fill="#6e6f73" text-anchor="middle">00:01:02</text>
<text transform="translate(1438.83 1298.20) scale(0.9650 1)" font-size="21.90" fill="#6e6f73" text-anchor="middle">60.07%</text>
<text transform="translate(1662.94 1298.20) scale(0.9650 1)" font-size="21.90" fill="#6e6f73" text-anchor="middle">58.47%</text>
<text transform="translate(127.01 1358.20) scale(0.9500 1)" font-size="21.90" fill="#6e6f73" text-anchor="middle">2</text>
<text transform="translate(426.27 1358.20) scale(1.0500 1)" font-size="21.90" fill="#6e6f73" text-anchor="middle">residential-security</text>
<text transform="translate(770.05 1358.20) scale(0.9650 1)" font-size="21.90" fill="#6e6f73" text-anchor="middle">56</text>
<text transform="translate(993.18 1358.20) scale(0.9650 1)" font-size="21.90" fill="#6e6f73" text-anchor="middle">40</text>
<text transform="translate(1216.03 1358.20) scale(0.9650 1)" font-size="21.90" fill="#6e6f73" text-anchor="middle">00:00:23</text>
<text transform="translate(1438.83 1358.20) scale(0.9650 1)" font-size="21.90" fill="#6e6f73" text-anchor="middle">63.64%</text>
<text transform="translate(1662.83 1358.20) scale(0.9650 1)" font-size="21.90" fill="#6e6f73" text-anchor="middle">25%</text>
<text transform="translate(127.06 1418.20) scale(0.9500 1)" font-size="21.90" fill="#6e6f73" text-anchor="middle">3</text>
<text transform="translate(426.59 1418.20) scale(1.0500 1)" font-size="21.90" fill="#6e6f73" text-anchor="middle">contact</text>
<text transform="translate(770.10 1418.20) scale(0.9650 1)" font-size="21.90" fill="#6e6f73" text-anchor="middle">51</text>
<text transform="translate(993.24 1418.20) scale(0.9650 1)" font-size="21.90" fill="#6e6f73" text-anchor="middle">48</text>
<text transform="translate(1216.05 1418.20) scale(0.9650 1)" font-size="21.90" fill="#6e6f73" text-anchor="middle">00:00:49</text>
<text transform="translate(1438.83 1418.20) scale(0.9650 1)" font-size="21.90" fill="#6e6f73" text-anchor="middle">76.92%</text>
<text transform="translate(1663.12 1418.20) scale(0.9650 1)" font-size="21.90" fill="#6e6f73" text-anchor="middle">43.14%</text>
<text transform="translate(127.06 1478.20) scale(0.9500 1)" font-size="21.90" fill="#6e6f73" text-anchor="middle">4</text>
<text transform="translate(426.22 1478.20) scale(1.0500 1)" font-size="21.90" fill="#6e6f73" text-anchor="middle">home-security</text>
<text transform="translate(770.24 1478.20) scale(0.9650 1)" font-size="21.90" fill="#6e6f73" text-anchor="middle">48</text>
<text transform="translate(993.08 1478.20) scale(0.9650 1)" font-size="21.90" fill="#6e6f73" text-anchor="middle">44</text>
<text transform="translate(1216.11 1478.20) scale(0.9650 1)" font-size="21.90" fill="#6e6f73" text-anchor="middle">00:00:57</text>
<text transform="translate(1438.91 1478.20) scale(0.9650 1)" font-size="21.90" fill="#6e6f73" text-anchor="middle">80%</text>
<text transform="translate(1662.96 1478.20) scale(0.9650 1)" font-size="21.90" fill="#6e6f73" text-anchor="middle">39.58%</text>
<text transform="translate(127.01 1538.20) scale(0.9500 1)" font-size="21.90" fill="#6e6f73" text-anchor="middle">5</text>
<text transform="translate(426.93 1538.20) scale(1.0500 1)" font-size="21.90" fill="#6e6f73" text-anchor="middle">aboutus</text>
<text transform="translate(770.18 1538.20) scale(0.9650 1)" font-size="21.90" fill="#6e6f73" text-anchor="middle">40</text>
<text transform="translate(993.02 1538.20) scale(0.9650 1)" font-size="21.90" fill="#6e6f73" text-anchor="middle">27</text>
<text transform="translate(1216.03 1538.20) scale(0.9650 1)" font-size="21.90" fill="#6e6f73" text-anchor="middle">00:00:46</text>
<text transform="translate(1438.94 1538.20) scale(0.9650 1)" font-size="21.90" fill="#6e6f73" text-anchor="middle">50%</text>
<text transform="translate(1662.95 1538.20) scale(0.9650 1)" font-size="21.90" fill="#6e6f73" text-anchor="middle">32.5%</text>
<text transform="translate(126.93 1598.20) scale(0.9500 1)" font-size="21.90" fill="#6e6f73" text-anchor="middle">6</text>
<text transform="translate(427.59 1598.20) scale(1.0500 1)" font-size="21.90" fill="#6e6f73" text-anchor="middle">thank-you</text>
<text transform="translate(770.02 1598.20) scale(0.9650 1)" font-size="21.90" fill="#6e6f73" text-anchor="middle">22</text>
<text transform="translate(993.02 1598.20) scale(0.9650 1)" font-size="21.90" fill="#6e6f73" text-anchor="middle">22</text>
<text transform="translate(1216.11 1598.20) scale(0.9650 1)" font-size="21.90" fill="#6e6f73" text-anchor="middle">00:00:17</text>
<text transform="translate(1438.91 1598.20) scale(0.9650 1)" font-size="21.90" fill="#6e6f73" text-anchor="middle">83.33%</text>
<text transform="translate(1662.91 1598.20) scale(0.9650 1)" font-size="21.90" fill="#6e6f73" text-anchor="middle">86.36%</text>
<text transform="translate(127.01 1658.20) scale(0.9500 1)" font-size="21.90" fill="#6e6f73" text-anchor="middle">7</text>
<text transform="translate(426.93 1658.20) scale(1.0500 1)" font-size="21.90" fill="#6e6f73" text-anchor="middle">aboutus</text>
<text transform="translate(769.71 1658.20) scale(0.9650 1)" font-size="21.90" fill="#6e6f73" text-anchor="middle">19</text>
<text transform="translate(992.76 1658.20) scale(0.9650 1)" font-size="21.90" fill="#6e6f73" text-anchor="middle">17</text>
<text transform="translate(1216.11 1658.20) scale(0.9650 1)" font-size="21.90" fill="#6e6f73" text-anchor="middle">00:01:37</text>
<text transform="translate(1438.58 1658.20) scale(0.9650 1)" font-size="21.90" fill="#6e6f73" text-anchor="middle">100%</text>
<text transform="translate(1663.12 1658.20) scale(0.9650 1)" font-size="21.90" fill="#6e6f73" text-anchor="middle">47.37%</text>
<text transform="translate(127.01 1718.20) scale(0.9500 1)" font-size="21.90" fill="#6e6f73" text-anchor="middle">8</text>
<text transform="translate(426.92 1718.20) scale(1.0500 1)" font-size="21.90" fill="#6e6f73" text-anchor="middle">commercial-security-systems</text>
<text transform="translate(769.68 1718.20) scale(0.9650 1)" font-size="21.90" fill="#6e6f73" text-anchor="middle">18</text>
<text transform="translate(992.76 1718.20) scale(0.9650 1)" font-size="21.90" fill="#6e6f73" text-anchor="middle">17</text>
<text transform="translate(1216.03 1718.20) scale(0.9650 1)" font-size="21.90" fill="#6e6f73" text-anchor="middle">00:00:26</text>
<text transform="translate(1438.58 1718.20) scale(0.9650 1)" font-size="21.90" fill="#6e6f73" text-anchor="middle">100%</text>
<text transform="translate(1662.83 1718.20) scale(0.9650 1)" font-size="21.90" fill="#6e6f73" text-anchor="middle">66.67%</text></g>
</svg>
</body></html>
